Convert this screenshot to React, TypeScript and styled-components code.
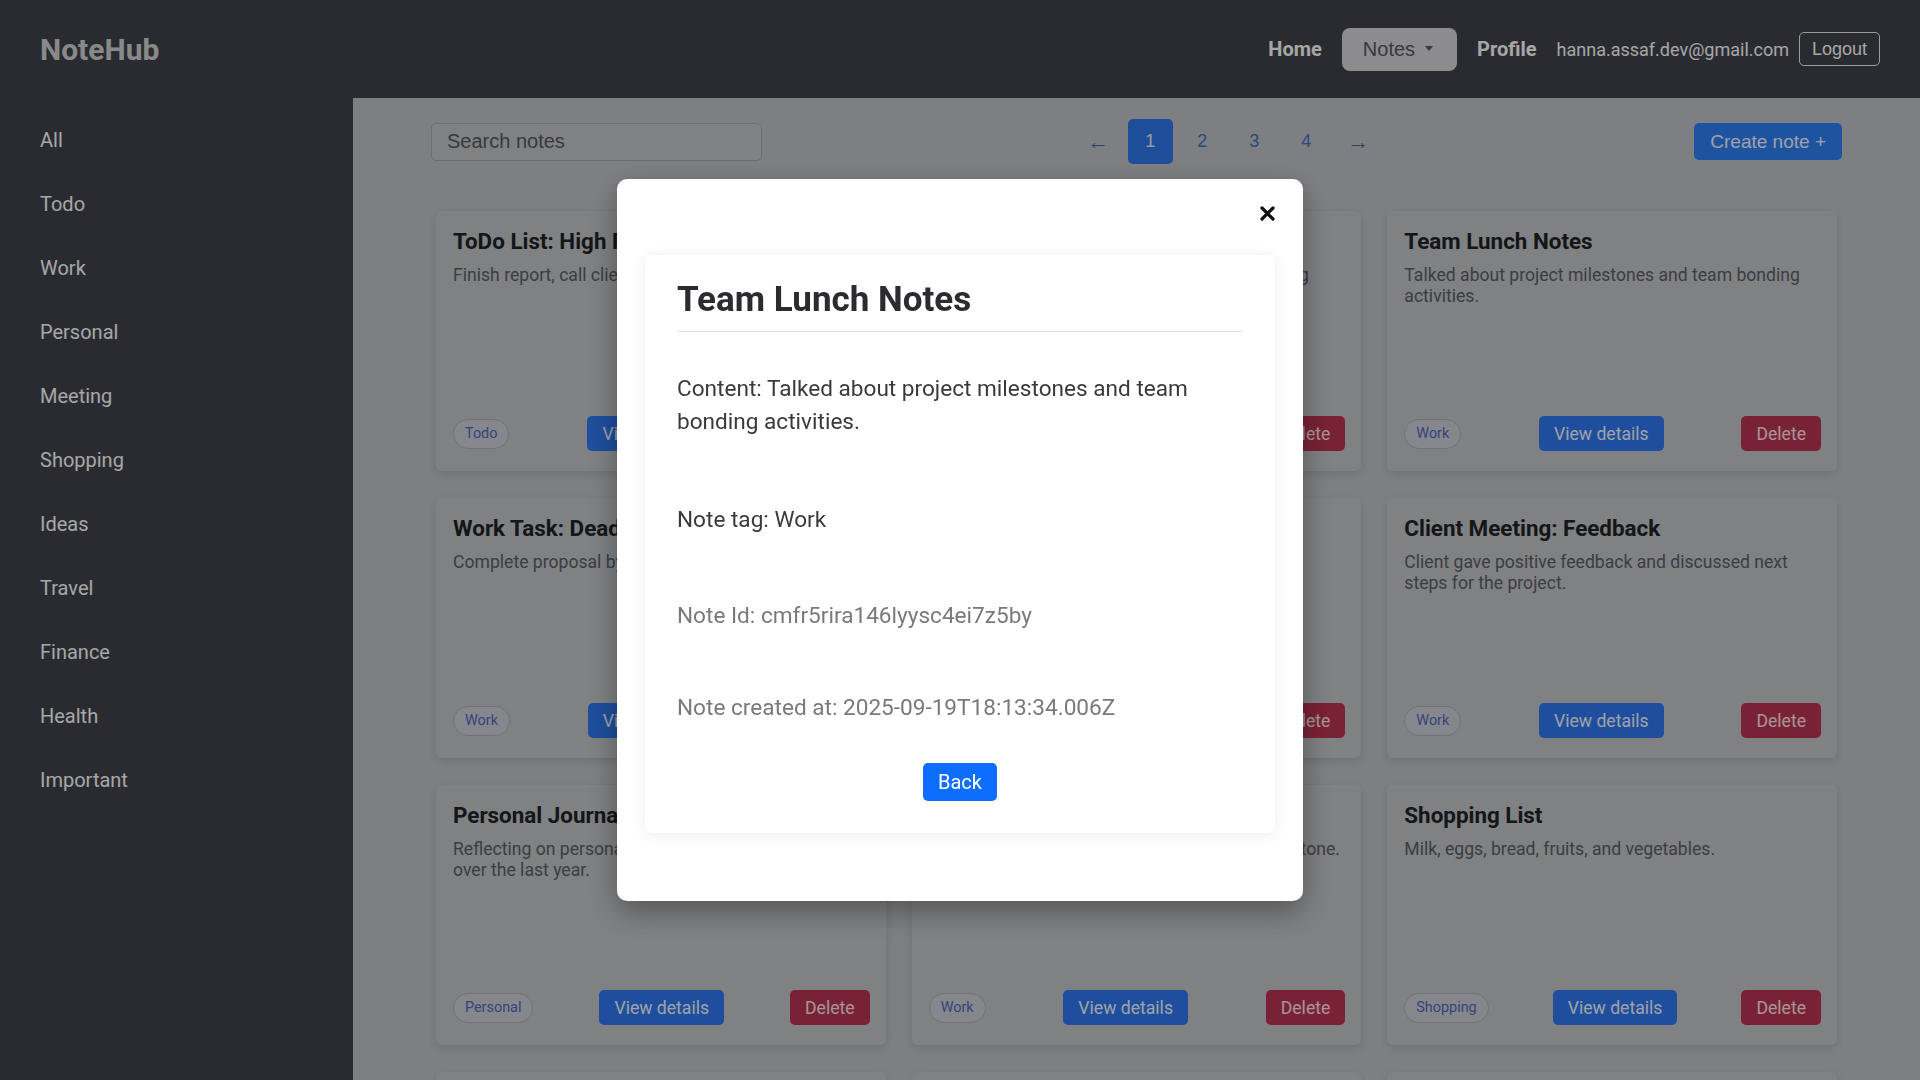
import React from "react";
import styled, { createGlobalStyle } from "styled-components";

const GlobalStyle = createGlobalStyle`
  html, body { margin: 0; padding: 0; height: 100%; overflow: hidden; }
  body { font-family: Roboto, "Noto Sans", "Liberation Sans", sans-serif; background: #c2c4c8; }
  * { box-sizing: border-box; }
`;

const Page = styled.div`
  height: 100vh;
  display: flex;
  flex-direction: column;
  overflow: hidden;
`;

const NavBar = styled.header`
  height: 98px;
  flex: 0 0 98px;
  background: #41434a;
  display: flex;
  align-items: center;
  justify-content: space-between;
  padding: 0 40px;
`;

const Brand = styled.div`
  font-size: 30px;
  font-weight: 700;
  color: #d2d4d4;
`;

const NavRight = styled.nav`
  display: flex;
  align-items: center;
`;

const NavLink = styled.a`
  font-size: 20px;
  font-weight: 700;
  color: #ffffff;
  margin-right: 20px;
  cursor: pointer;
`;

const DropButton = styled.button`
  height: 43px;
  padding: 0 24px 0 21px;
  border: none;
  border-radius: 8px;
  background: #d8d8db;
  color: #55575b;
  font-family: "Liberation Sans", Arial, sans-serif;
  font-size: 20px;
  display: flex;
  align-items: center;
  gap: 10px;
  margin-right: 20px;
`;

const Caret = styled.span`
  width: 0;
  height: 0;
  border-left: 4px solid transparent;
  border-right: 4px solid transparent;
  border-top: 5px solid #55575b;
  margin-top: -2px;
`;

const Email = styled.span`
  font-size: 18px;
  color: #ffffff;
  margin-right: 10px;
`;

const OutlineButton = styled.button`
  height: 34px;
  width: 81px;
  border: 1px solid #eeeeee;
  border-radius: 5px;
  background: transparent;
  color: #ffffff;
  font-family: "Liberation Sans", Arial, sans-serif;
  font-size: 18px;
`;

const Body = styled.div`
  flex: 1;
  display: flex;
  min-height: 0;
`;

const Sidebar = styled.aside`
  width: 353px;
  flex: 0 0 353px;
  background: #41434a;
  padding: 10px 0 0 40px;
  display: flex;
  flex-direction: column;
`;

const SideItem = styled.a`
  height: 64px;
  display: flex;
  align-items: center;
  font-size: 20px;
  color: #ffffff;
`;

const Main = styled.main`
  flex: 1;
  background: #c2c4c8;
  padding: 21px 78px 0;
  overflow: hidden;
`;

const TopBar = styled.div`
  height: 45px;
  display: flex;
  align-items: center;
  justify-content: space-between;
`;

const SearchInput = styled.input`
  width: 331px;
  height: 38px;
  border: 1px solid #a7a9ae;
  border-radius: 5px;
  background: #c4c6ca;
  padding: 0 15px;
  font-family: "Liberation Sans", Arial, sans-serif;
  font-size: 20px;
  color: #333;
  &::placeholder { color: #56595e; }
`;

const Pager = styled.div`
  display: flex;
  gap: 7px;
`;

const PageButton = styled.button<{ $active?: boolean; $arrow?: boolean }>`
  width: 45px;
  height: 45px;
  border: none;
  border-radius: 5px;
  background: ${(p) => (p.$active ? "#2f78ec" : "transparent")};
  color: ${(p) => (p.$active ? "#e6eeff" : p.$arrow ? "#4d6a9e" : "#4670bb")};
  font-family: "Liberation Sans", Arial, sans-serif;
  font-size: ${(p) => (p.$arrow ? "22px" : "18px")};
`;

const PrimaryButton = styled.button`
  height: 37px;
  padding: 0 16px;
  border: none;
  border-radius: 5px;
  background: #2f80f6;
  color: #f2f6ff;
  font-family: "Liberation Sans", Arial, sans-serif;
  font-size: 19px;
`;

const Grid = styled.div`
  margin-top: 47px;
  padding: 0 5px;
  display: grid;
  grid-template-columns: repeat(3, 1fr);
  gap: 27px 26px;
`;

const Card = styled.article`
  height: 260px;
  background: #c4c6ca;
  border-radius: 6px;
  box-shadow: 0 3px 10px rgba(0, 0, 0, 0.12);
  padding: 16px 16px 20px 17px;
  display: flex;
  flex-direction: column;
`;

const CardTitle = styled.h3`
  margin: 0 0 10px;
  font-size: 22.4px;
  line-height: 28px;
  font-weight: 700;
  color: #202225;
`;

const CardText = styled.p`
  margin: 0;
  font-size: 17.6px;
  line-height: 21px;
  color: #5c5f65;
  flex: 1;
`;

const CardFooter = styled.div`
  display: flex;
  align-items: center;
  justify-content: space-between;
`;

const Tag = styled.span`
  height: 30px;
  padding: 0 11px;
  display: inline-flex;
  align-items: center;
  border: 1px solid #aeb1b8;
  border-radius: 15px;
  background: #ccd0d8;
  color: #5369c0;
  font-size: 14.4px;
`;

const SmallButton = styled.button<{ $tone: "primary" | "danger" }>`
  height: 35px;
  padding: 0 15px;
  border: none;
  border-radius: 5px;
  background: ${(p) => (p.$tone === "primary" ? "#2f79f2" : "#bc3552")};
  color: ${(p) => (p.$tone === "primary" ? "#f4f8ff" : "#ffe3e8")};
  font-family: Roboto, sans-serif;
  font-size: 17.6px;
`;

const Overlay = styled.div`
  position: fixed;
  inset: 0;
  background: rgba(0, 0, 0, 0.35);
  display: flex;
  align-items: center;
  justify-content: center;
  z-index: 10;
`;

const Modal = styled.div`
  width: 686px;
  background: #ffffff;
  border-radius: 10px;
  box-shadow: 0 10px 30px rgba(0, 0, 0, 0.35);
  padding: 0 28px 68px;
`;

const CloseBar = styled.div`
  height: 76px;
  padding-top: 23px;
  display: flex;
  justify-content: flex-end;
`;

const CloseButton = styled.button`
  width: 22px;
  height: 22px;
  padding: 0;
  margin-right: -3px;
  border: none;
  background: transparent;
  display: flex;
  align-items: center;
  justify-content: center;
`;

const DetailCard = styled.section`
  border-radius: 8px;
  box-shadow: 0 2px 16px rgba(0, 0, 0, 0.07);
  padding: 25px 32px 32px;
  display: flex;
  flex-direction: column;
`;

const DetailTitle = styled.h2`
  margin: 0;
  font-size: 35px;
  line-height: 40px;
  font-weight: 700;
  color: #2a2c2f;
  padding-bottom: 11px;
  border-bottom: 1px solid #dee2e6;
`;

const Para = styled.p<{ $muted?: boolean; $top?: number; $bottom: number }>`
  margin: ${(p) => p.$top ?? 0}px 0 ${(p) => p.$bottom}px;
  font-size: 22.6px;
  line-height: 33px;
  color: ${(p) => (p.$muted ? "#7a7a7a" : "#3a3a3a")};
`;

const BackButton = styled.button`
  align-self: center;
  height: 38px;
  padding: 0 15px;
  border: none;
  border-radius: 5px;
  background: #0d6efd;
  color: #ffffff;
  font-family: Roboto, sans-serif;
  font-size: 20px;
`;

const categories = [
  "All",
  "Todo",
  "Work",
  "Personal",
  "Meeting",
  "Shopping",
  "Ideas",
  "Travel",
  "Finance",
  "Health",
  "Important",
];

const notes = [
  { title: "ToDo List: High Priority", content: "Finish report, call client, and schedule team meeting.", tag: "Todo" },
  { title: "Meeting Notes: Sprint Review", content: "Discussed sprint goals and reviewed the backlog items.", tag: "Meeting" },
  { title: "Team Lunch Notes", content: "Talked about project milestones and team bonding activities.", tag: "Work" },
  { title: "Work Task: Deadline", content: "Complete proposal by Friday.", tag: "Work" },
  { title: "Ideas: New Features", content: "Brainstorm features for the next release.", tag: "Ideas" },
  { title: "Client Meeting: Feedback", content: "Client gave positive feedback and discussed next steps for the project.", tag: "Work" },
  { title: "Personal Journal", content: "Reflecting on personal growth and achievements over the last year.", tag: "Personal" },
  { title: "Project Milestone", content: "Celebrated reaching the important project milestone.", tag: "Work" },
  { title: "Shopping List", content: "Milk, eggs, bread, fruits, and vegetables.", tag: "Shopping" },
  { title: "Travel Plans", content: "Book flights and hotel for the summer trip.", tag: "Travel" },
  { title: "Finance: Budget", content: "Review monthly expenses and savings goals.", tag: "Finance" },
  { title: "Health: Workout", content: "Go to the gym three times this week.", tag: "Health" },
];

export default function App() {
  return (
    <>
      <GlobalStyle />
      <Page>
        <NavBar>
          <Brand>NoteHub</Brand>
          <NavRight>
            <NavLink>Home</NavLink>
            <DropButton>
              Notes <Caret />
            </DropButton>
            <NavLink>Profile</NavLink>
            <Email>hanna.assaf.dev@gmail.com</Email>
            <OutlineButton>Logout</OutlineButton>
          </NavRight>
        </NavBar>
        <Body>
          <Sidebar>
            {categories.map((c) => (
              <SideItem key={c}>{c}</SideItem>
            ))}
          </Sidebar>
          <Main>
            <TopBar>
              <SearchInput placeholder="Search notes" />
              <Pager>
                <PageButton $arrow>←</PageButton>
                <PageButton $active>1</PageButton>
                <PageButton>2</PageButton>
                <PageButton>3</PageButton>
                <PageButton>4</PageButton>
                <PageButton $arrow>→</PageButton>
              </Pager>
              <PrimaryButton>Create note +</PrimaryButton>
            </TopBar>
            <Grid>
              {notes.map((n, i) => (
                <Card key={i}>
                  <CardTitle>{n.title}</CardTitle>
                  <CardText>{n.content}</CardText>
                  <CardFooter>
                    <Tag>{n.tag}</Tag>
                    <SmallButton $tone="primary">View details</SmallButton>
                    <SmallButton $tone="danger">Delete</SmallButton>
                  </CardFooter>
                </Card>
              ))}
            </Grid>
          </Main>
        </Body>
        <Overlay>
          <Modal>
            <CloseBar>
              <CloseButton aria-label="Close">
                <svg width="15" height="15" viewBox="0 0 15 15">
                  <path d="M2 2 L13 13 M13 2 L2 13" stroke="#111" strokeWidth="3.2" strokeLinecap="round" />
                </svg>
              </CloseButton>
            </CloseBar>
            <DetailCard>
              <DetailTitle>Team Lunch Notes</DetailTitle>
              <Para $top={40} $bottom={65}>
                Content: Talked about project milestones and team bonding activities.
              </Para>
              <Para $bottom={63}>Note tag: Work</Para>
              <Para $muted $bottom={59}>Note Id: cmfr5rira146lyysc4ei7z5by</Para>
              <Para $muted $bottom={39}>Note created at: 2025-09-19T18:13:34.006Z</Para>
              <BackButton>Back</BackButton>
            </DetailCard>
          </Modal>
        </Overlay>
      </Page>
    </>
  );
}
